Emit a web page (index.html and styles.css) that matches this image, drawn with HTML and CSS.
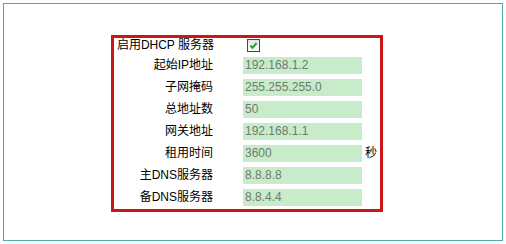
FILE: index.html
```html
<!DOCTYPE html>
<html lang="zh-CN">
<head>
    <meta charset="UTF-8">
    <title>DHCP</title>
    <link rel="stylesheet" href="styles.css">
</head>
<body>
    <div class="frame">
        <div class="dhcp">
            <div class="label top">启用DHCP 服务器</div>
            <div class="field top">
                <span class="check">
                    <svg width="11" height="11" viewBox="0 0 11 11"><path d="M2.5 5.5 L4.5 7.8 L8.6 3" fill="none" stroke="#2f9a2f" stroke-width="2"/></svg>
                </span>
            </div>
            <div class="unit top"></div>

            <div class="label">起始IP地址</div>
            <div class="field"><span class="box">192.168.1.2</span></div>
            <div class="unit"></div>

            <div class="label">子网掩码</div>
            <div class="field"><span class="box">255.255.255.0</span></div>
            <div class="unit"></div>

            <div class="label">总地址数</div>
            <div class="field"><span class="box">50</span></div>
            <div class="unit"></div>

            <div class="label">网关地址</div>
            <div class="field"><span class="box">192.168.1.1</span></div>
            <div class="unit"></div>

            <div class="label">租用时间</div>
            <div class="field"><span class="box">3600</span></div>
            <div class="unit">秒</div>

            <div class="label">主DNS服务器</div>
            <div class="field"><span class="box">8.8.8.8</span></div>
            <div class="unit"></div>

            <div class="label">备DNS服务器</div>
            <div class="field"><span class="box">8.8.4.4</span></div>
            <div class="unit"></div>
        </div>
    </div>
</body>
</html>
```

FILE: styles.css
```css
body{
    margin: 0;
    background: #fff;
    font-family: "Liberation Sans", "Noto Sans CJK SC", sans-serif;
    font-size: 12px;
    color: #000;
}
.frame{
    box-sizing: border-box;
    margin: 3px;
    width: 500px;
    height: 238px;
    border: 1px solid #4fa8ae;
    padding-top: 31px;
}
.dhcp{
    margin-left: 107px;
    width: 266px;
    border: 3px solid #cc1515;
    padding-bottom: 3px;
    display: grid;
    grid-template-columns: 129px 119px 1fr;
    grid-template-rows: 14px;
    grid-auto-rows: 17px;
    row-gap: 5px;
    align-items: start;
}
.label{
    padding-right: 30px;
    text-align: right;
    white-space: nowrap;
    height: 17px;
    line-height: 17px;
}
.field{
    height: 17px;
}
.unit{
    padding-left: 3px;
    height: 17px;
    line-height: 17px;
}
.top{
    height: 15px;
    line-height: 15px;
}
.label.top{
    margin-right: -1px;
}
.box{
    display: block;
    height: 17px;
    line-height: 17px;
    padding-left: 2px;
    background: #c8ebc9;
    color: #6f7a70;
}
.check{
    display: block;
    box-sizing: border-box;
    width: 13px;
    height: 13px;
    margin: 1px 0 0 4px;
    border: 1px solid #28506e;
    background: linear-gradient(#e4e4e4, #fbfbfb);
}
.check svg{
    display: block;
}
```
